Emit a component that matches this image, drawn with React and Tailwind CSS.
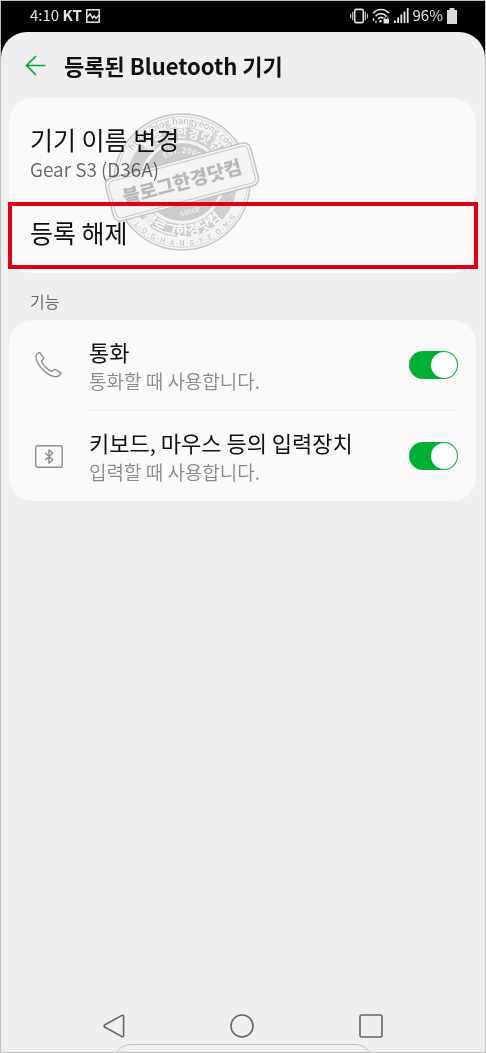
import { useState } from 'react';

const FONT = "font-['Noto_Sans_CJK_KR','Noto_Sans',sans-serif]";

function PictureIcon() {
  return (
    <svg width="14" height="14" viewBox="0 0 14 14" fill="none" stroke="#e4e4e4" strokeWidth="1.5">
      <rect x="0.8" y="0.8" width="12.4" height="12.4" />
      <path d="M1 8.5 4.2 5l2.2 4 1.8-2 1.8 2.4L13 6" />
    </svg>
  );
}

function VibrateIcon() {
  return (
    <svg width="18" height="16" viewBox="0 0 19 16" fill="none" stroke="#e4e4e4">
      <rect x="5" y="1" width="9" height="14" rx="1.5" strokeWidth="1.6" />
      <path d="M2.9 3.5v9M16.1 3.5v9" strokeWidth="1.1" />
      <path d="M.7 5.5v5M18.3 5.5v5" strokeWidth="1" />
    </svg>
  );
}

function WifiLockIcon() {
  return (
    <svg width="18" height="16" viewBox="0 0 18 16" fill="none" stroke="#e4e4e4" strokeWidth="1.6">
      <path d="M1 5.2C5.5.3 12.5.3 17 5.2" />
      <path d="M3.5 8.2C6.8 4.8 11.2 4.8 14.5 8.2" />
      <path d="M6 11c2-2 4-2 5.5-.5" />
      <path d="M1.5 10v3M4 12.5v2.5" strokeWidth="1.2" />
      <circle cx="8.5" cy="13.2" r="1.3" fill="#e4e4e4" stroke="none" />
      <rect x="11.5" y="11" width="5.5" height="4.5" fill="#e4e4e4" stroke="none" />
      <path d="M12.8 11v-1c0-2 3-2 3 0v1" strokeWidth="1" />
    </svg>
  );
}

function SignalIcon() {
  return (
    <svg width="15" height="15" viewBox="0 0 15 15" fill="#e4e4e4">
      <rect x="0" y="12.5" width="1.8" height="2.5" />
      <rect x="3.2" y="9.5" width="1.8" height="5.5" />
      <rect x="6.4" y="6.5" width="1.8" height="8.5" />
      <rect x="9.6" y="3.5" width="1.8" height="11.5" />
      <rect x="12.8" y="0" width="1.8" height="15" />
    </svg>
  );
}

function BatteryIcon() {
  return (
    <svg width="10" height="16" viewBox="0 0 10 16" fill="#d8d8d8">
      <path d="M2.5 0h5v2H10v14H0V2h2.5z" />
    </svg>
  );
}

function PhoneIcon() {
  return (
    <svg width="28" height="28" viewBox="1 1 27 27" fill="none" stroke="#8e8e8e" strokeWidth="1.3" strokeLinejoin="round">
      <path d="M5.6 2.4 9 7.3c.4.7.3 1.3-.2 1.8L7.3 10.7c.6 3 6.2 9 9.8 10l2-1.6c.5-.4 1-.5 1.6-.1l5.5 3.3c-1.3 2.7-3.7 3.9-6.9 3.3C11.6 24.1 3 14.6 2.1 7.5c-.3-2.2.9-4.2 3.5-5.1z" />
    </svg>
  );
}

function InputDeviceIcon() {
  return (
    <svg width="28" height="23" viewBox="0 0 28 23" fill="none" stroke="#8e8e8e" strokeWidth="1.4" strokeLinejoin="round">
      <rect x="0.7" y="0.7" width="26.6" height="21.6" rx="2" />
      <path d="m10.2 8 7.6 6.8-3.8 3.5V4.7l3.8 3.5-7.6 6.8" />
    </svg>
  );
}

// Round blog stamp laid over the first card; multiplied so the row text stays dark.
function Stamp() {
  return (
    <svg
      className="pointer-events-none absolute top-[14px] left-[96px] opacity-75 mix-blend-multiply"
      width="154"
      height="140"
      viewBox="-77 -70 154 140"
      aria-hidden="true"
    >
      <defs>
        <path id="urlArc" d="M-58 0A58 58 0 0 1 58 0" />
        <path id="topArc" d="M-45 0A45 45 0 0 1 45 0" />
        <path id="innerArc" d="M-29 0A29 29 0 0 1 29 0" />
        <path id="bottomArc" d="M-54 0A54 54 0 0 0 54 0" />
        <path id="edgeArc" d="M-64 0A64 64 0 0 0 64 0" />
      </defs>
      <g className="font-bold" textAnchor="middle">
        <circle r="68" fill="#f7f7f7" stroke="#b8b8b8" strokeWidth="1.5" />
        <circle r="65.5" fill="none" stroke="#d0d0d0" />
        <circle r="48.5" fill="none" stroke="#c4c4c4" strokeWidth="13" />
        <circle r="39" fill="#c0c0c0" />
        <text fill="#aaa" fontSize="9" fontWeight="400">
          <textPath href="#urlArc" startOffset="50%">http://blog.hangyeong.com</textPath>
        </text>
        <text fill="#fff" fontSize="12">
          <textPath href="#topArc" startOffset="50%">블로그한경닷컴</textPath>
        </text>
        <text fill="#fff" fontSize="14">
          <textPath href="#bottomArc" startOffset="50%">블로그한경닷컴</textPath>
        </text>
        <text fill="#f2f2f2" fontSize="8">
          <textPath href="#innerArc" startOffset="50%">EST. 2009</textPath>
        </text>
        <text fill="#aaa" fontSize="7" fontWeight="400">
          <textPath href="#edgeArc" startOffset="50%">B - L - O - G - H - A - N - G - Y - E - O - N - G</textPath>
        </text>
        <g transform="rotate(-15)">
          <text y="33" fill="#f2f2f2" fontSize="8">since</text>
          <rect x="-75" y="-22" width="150" height="44" rx="7" fill="#f7f7f7" stroke="#b4b4b4" strokeWidth="1.5" />
          <rect x="-72" y="-19" width="144" height="38" rx="5" fill="none" stroke="#bcbcbc" />
          <text y="7" fill="#a6a6a6" fontSize="19" fontWeight="900">블로그한경닷컴</text>
        </g>
      </g>
    </svg>
  );
}

function FeatureRow({ id, icon, title, detail }) {
  const [on, setOn] = useState(true);

  return (
    <div className="flex h-[90px] items-center pr-[18px] pl-[26px]">
      <span className="flex w-[54px] shrink-0">{icon}</span>
      <label htmlFor={id} className="flex-1">
        <span className="block text-[22px] leading-8 text-[#111]">{title}</span>
        <span className="block text-[19px] leading-7 font-[350] text-[#8a8a8a]">{detail}</span>
      </label>
      <input
        id={id}
        type="checkbox"
        checked={on}
        onChange={(e) => setOn(e.target.checked)}
        className="flex h-7 w-[49px] shrink-0 appearance-none items-center rounded-full bg-[#b5b5b5] px-px before:size-[26px] before:rounded-full before:bg-white checked:justify-end checked:bg-[#00b035]"
      />
    </div>
  );
}

export default function App() {
  return (
    <div className={`flex min-h-screen flex-col border border-[#bdbdbd] bg-black ${FONT}`}>
      <div className="flex h-[31px] items-center justify-between pr-7 pb-0.5 pl-[29px] text-[15px] text-[#e4e4e4]">
        <div className="flex items-center gap-1">
          <span>4:10 <b>KT</b></span>
          <PictureIcon />
        </div>
        <div className="flex items-center gap-1">
          <VibrateIcon />
          <WifiLockIcon />
          <SignalIcon />
          <span>96%</span>
          <BatteryIcon />
        </div>
      </div>

      <div className="flex flex-1 flex-col rounded-t-[26px] bg-[#efefef]">
        <header className="flex h-[66px] items-center gap-[18px] pl-6">
          <button type="button" aria-label="뒤로">
            <svg width="21" height="21" viewBox="0 0 21 21" fill="none" stroke="#0da935" strokeWidth="1.7">
              <path d="M20.5 10.5H1.5M11 1 1.5 10.5 11 20" />
            </svg>
          </button>
          <h1 className="text-[22px] font-bold text-[#111]">등록된 Bluetooth 기기</h1>
        </header>

        <main className="flex-1 px-2 pr-[9px]">
          <section className="relative rounded-3xl bg-[#fafafa]">
            <button type="button" className="block h-[101px] w-full px-[21px] pt-2 text-left">
              <span className="block text-[25px] leading-8 text-[#111]">기기 이름 변경</span>
              <span className="block text-[19px] leading-7 font-[350] text-[#666]">Gear S3 (D36A)</span>
            </button>
            <div className="relative">
              <button type="button" className="block h-[74px] w-full border-t border-[#f2f2f2] px-[21px] pb-2 text-left text-[25px] text-[#111]">
                등록 해제
              </button>
              <div className="pointer-events-none absolute top-[3px] -right-0.5 bottom-1 -left-px z-10 border-4 border-[#e00013]" />
            </div>
            <Stamp />
          </section>

          <h2 className="flex h-[47px] items-center px-[21px] pt-2 text-base font-[350] text-[#666]">기능</h2>

          <section className="rounded-3xl bg-[#fafafa]">
            <FeatureRow id="call" icon={<PhoneIcon />} title="통화" detail="통화할 때 사용합니다." />
            <div className="mr-4 ml-[79px] h-px bg-[#efefef]" />
            <FeatureRow
              id="input-device"
              icon={<InputDeviceIcon />}
              title="키보드, 마우스 등의 입력장치"
              detail="입력할 때 사용합니다."
            />
          </section>
        </main>

        <nav className="flex flex-col items-center">
          <div className="flex h-9 w-[58%] items-center justify-between">
            <button type="button" aria-label="이전">
              <svg width="22" height="24" viewBox="0 0 22 24" fill="none" stroke="#666" strokeWidth="1.6" strokeLinejoin="round">
                <path d="M19 1.4 2 10.7c-1.2.7-1.2 2 0 2.6l17 9.3c1 .5 1.6.1 1.6-1V2.4c0-1.1-.6-1.5-1.6-1z" />
              </svg>
            </button>
            <button type="button" aria-label="홈">
              <svg width="24" height="24" viewBox="0 0 24 24" fill="none" stroke="#666" strokeWidth="1.6">
                <circle cx="12" cy="12" r="11" />
              </svg>
            </button>
            <button type="button" aria-label="최근 앱">
              <svg width="24" height="24" viewBox="0 0 24 24" fill="none" stroke="#666" strokeWidth="1.6">
                <rect x="1" y="1" width="22" height="22" rx="1.5" />
              </svg>
            </button>
          </div>
          <div className="h-2 w-[260px] overflow-hidden">
            <div className="h-9 rounded-[18px] border border-[#bdbdbd]" />
          </div>
        </nav>
      </div>
    </div>
  );
}
